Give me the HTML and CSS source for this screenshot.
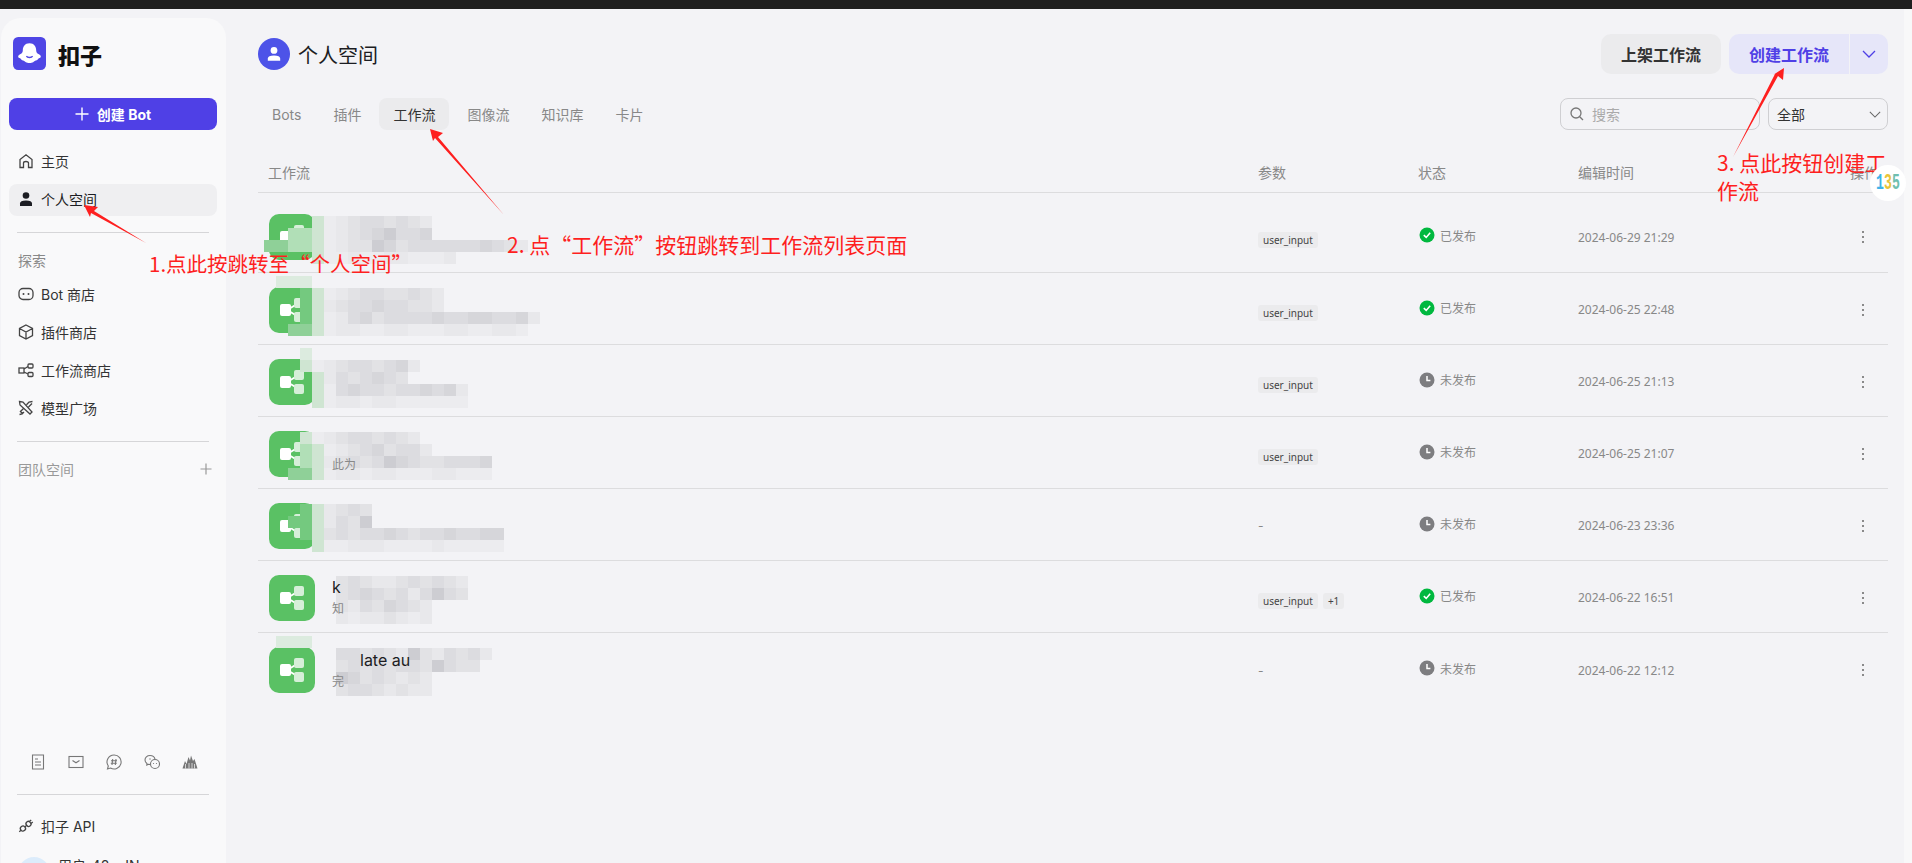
FILE: index.html
```html
<!DOCTYPE html>
<html lang="zh-CN">
<head>
    <meta charset="UTF-8">
    <title>扣子 - 工作流</title>
    <link rel="stylesheet" href="styles.css">
</head>
<body>

    <svg class="sprite" aria-hidden="true">
        <symbol id="wf-icon" viewBox="0 0 46 46">
            <rect width="46" height="46" rx="10" fill="#5ac164"/>
            <path d="M18 23 L30 16 M18 23 L30 30" stroke="#fff" stroke-width="2" fill="none"/>
            <rect x="25" y="11" width="10" height="10" rx="2" fill="#d6efd9"/>
            <rect x="25" y="25" width="10" height="10" rx="2" fill="#d6efd9"/>
            <rect x="11" y="17" width="11" height="12" rx="2" fill="#fff"/>
        </symbol>
        <symbol id="ok-icon" viewBox="0 0 16 16">
            <circle cx="8" cy="8" r="7.5" fill="#00b83f"/>
            <path d="M4.8 8.2 L7.2 10.4 L11.2 5.8" stroke="#fff" stroke-width="1.6" fill="none"/>
        </symbol>
        <symbol id="wait-icon" viewBox="0 0 16 16">
            <circle cx="8" cy="8" r="7.5" fill="#7d7d80"/>
            <path d="M8 4 V8.6 H11.4" stroke="#fff" stroke-width="1.5" fill="none"/>
        </symbol>
        <symbol id="dots-icon" viewBox="0 0 4 16">
            <circle cx="2" cy="3" r="1" fill="#666"/>
            <circle cx="2" cy="8" r="1" fill="#666"/>
            <circle cx="2" cy="13" r="1" fill="#666"/>
        </symbol>
    </svg>

    <div class="topbar"></div>

    <div class="app">
        <aside class="sidebar">
            <div class="brand">
                <svg class="brand-logo" viewBox="0 0 32 32">
                    <rect width="32" height="32" rx="5" fill="#4f46e5"/>
                    <path d="M16 6 C11.500 6 9.500 9.500 9.500 13 C9.500 15 8.500 16 6.500 17 C4.500 18 4.500 20.500 7 20.500 C8.500 23 11 22.500 12.500 24.500 C14 25.500 18 25.500 19.500 24.500 C21 22.500 23.500 23 25 20.500 C27.500 20.500 27.500 18 25.500 17 C23.500 16 22.500 15 22.500 13 C22.500 9.500 20.500 6 16 6 Z" fill="#fff"/>
                    <path d="M13 18.500 C14 20.300 18 20.300 19 18.500" stroke="#4f46e5" stroke-width="1.300" fill="none"/>
                </svg>
                <span class="brand-name">扣子</span>
            </div>

            <button class="create-bot">
                <svg viewBox="0 0 14 14"><path d="M7 0.500 V13.500 M0.500 7 H13.500" stroke="#fff" stroke-width="1.400"/></svg>
                创建 Bot
            </button>

            <nav class="nav nav-main">
                <a class="nav-item">
                    <svg viewBox="0 0 16 16"><path d="M2 14.500 V6.500 L8 1.800 L14 6.500 V14.500 H10.500 V10 C10.500 8 5.500 8 5.500 10 V14.500 Z" class="line"/></svg>
                    主页
                </a>
                <a class="nav-item active">
                    <svg viewBox="0 0 16 16"><circle cx="8" cy="4.500" r="3.300" fill="#1c1d23"/><path d="M2 15 V12.500 C2 10.500 4 9.500 8 9.500 C12 9.500 14 10.500 14 12.500 V15 Z" fill="#1c1d23"/></svg>
                    个人空间
                </a>
            </nav>

            <div class="divider"></div>
            <div class="nav-label">探索</div>

            <nav class="nav">
                <a class="nav-item">
                    <svg viewBox="0 0 16 16"><rect x="1" y="2.500" width="14" height="11" rx="4" class="line"/><circle cx="5.500" cy="8" r="1" fill="#444"/><circle cx="10.500" cy="8" r="1" fill="#444"/></svg>
                    Bot 商店
                </a>
                <a class="nav-item">
                    <svg viewBox="0 0 16 16"><path d="M8 1 L14.500 4.500 V11.500 L8 15 L1.500 11.500 V4.500 Z M1.500 4.500 L8 8 L14.500 4.500 M8 8 V15" class="line"/></svg>
                    插件商店
                </a>
                <a class="nav-item">
                    <svg viewBox="0 0 16 16"><rect x="1" y="6" width="5" height="5" class="line"/><rect x="10" y="2" width="5" height="4" rx="1" class="line"/><rect x="10" y="10.500" width="5" height="4" rx="1" class="line"/><path d="M6 7 L10 4.500 M6 10 L10 12" class="line"/></svg>
                    工作流商店
                </a>
                <a class="nav-item">
                    <svg viewBox="0 0 16 16"><path d="M1.500 1.500 L5 2 L14 12 L12 14 L2 5 Z M14.500 1.500 L11 2 L8.500 4.800 M10.500 7 L14 3.500 M2 12 L5.500 8.500 M1.500 14.500 L4 14 L6 12 M2 11 L5 14" class="line"/></svg>
                    模型广场
                </a>
            </nav>

            <div class="divider divider-team"></div>
            <div class="team-row">
                <span>团队空间</span>
                <svg viewBox="0 0 12 12"><path d="M6 0.500 V11.500 M0.500 6 H11.500" stroke="#999" stroke-width="1.200"/></svg>
            </div>

            <div class="side-tools">
                <svg viewBox="0 0 16 16"><path d="M2.500 1 H13.500 V15 H2.500 Z M5 5 H8 M5 8 H11 M5 11 H11" class="line-grey"/></svg>
                <svg viewBox="0 0 16 16"><rect x="1" y="2.500" width="14" height="11" class="line-grey"/><path d="M4.500 6.500 L8 8.800 L11.500 6.500" class="line-grey"/></svg>
                <svg viewBox="0 0 16 16"><path d="M8 1 A7 7 0 1 1 4.500 14 L1.500 15 L2.300 12 A7 7 0 0 1 8 1 Z M6.700 5 L6 11 M10 5 L9.300 11 M5 6.800 H11 M4.800 9.200 H10.800" class="line-grey"/></svg>
                <svg viewBox="0 0 16 16"><path d="M6 1.500 C3 1.500 1 3.500 1 6 C1 7.500 1.700 8.700 3 9.500 L2.800 11 L4.500 10.200 L6.200 10.500" class="line-grey"/><circle cx="6" cy="5" r="0.700" fill="#777"/><path d="M6 1.500 C8.500 1.500 10.500 3 11 5" class="line-grey"/><circle cx="11" cy="10" r="4.500" class="line-grey"/><circle cx="9.500" cy="9.500" r="0.600" fill="#777"/><circle cx="12.500" cy="9.500" r="0.600" fill="#777"/></svg>
                <svg viewBox="0 0 16 16"><path d="M0.500 14.500 L3 7 L4.500 10 L6.500 3 L8 6.500 L9 1.500 L11 7 L12.500 5 L15.500 14.500 Z" fill="#777"/><path d="M3.500 14.500 V10 M7 14.500 V9 M10 14.500 V9 M12.500 14.500 V10" stroke="#fafafb" stroke-width="0.700"/></svg>
            </div>

            <div class="divider divider-foot"></div>
            <a class="nav-item nav-api">
                <svg viewBox="0 0 16 16"><g transform="rotate(-40 8 8)"><rect x="1.500" y="5.500" width="5" height="5" rx="2.300" class="line"/><rect x="9" y="5.500" width="4.500" height="5" rx="2" class="line"/><path d="M6.500 8 H9 M13.500 6.800 H15.800 M13.500 9.200 H15.800 M1.500 8 H-0.800" class="line"/></g></svg>
                扣子 API
            </a>
            <div class="user">
                <span class="user-avatar"></span>
                <span class="user-name">用户_48...JN</span>
            </div>
        </aside>

        <main class="main">
            <header class="page-head">
                <span class="space-avatar">
                    <svg viewBox="0 0 16 16"><circle cx="8" cy="4.800" r="3" fill="#fff"/><path d="M2.500 14 V12 C2.500 10.300 4.500 9.300 8 9.300 C11.500 9.300 13.500 10.300 13.500 12 V14 Z" fill="#fff"/></svg>
                </span>
                <h1>个人空间</h1>
                <div class="head-actions">
                    <button class="btn btn-grey">上架工作流</button>
                    <div class="btn-split">
                        <button class="btn btn-soft">创建工作流</button>
                        <button class="btn btn-soft btn-caret">
                            <svg viewBox="0 0 14 8"><path d="M1 1 L7 7 L13 1" stroke="#4f40e6" stroke-width="1.300" fill="none"/></svg>
                        </button>
                    </div>
                </div>
            </header>

            <div class="toolbar">
                <div class="tabs">
                    <a class="tab">Bots</a>
                    <a class="tab">插件</a>
                    <a class="tab active">工作流</a>
                    <a class="tab">图像流</a>
                    <a class="tab">知识库</a>
                    <a class="tab">卡片</a>
                </div>
                <div class="search">
                    <svg viewBox="0 0 14 14"><circle cx="6" cy="6" r="5" stroke="#777" stroke-width="1.300" fill="none"/><path d="M9.700 9.700 L13 13" stroke="#777" stroke-width="1.300"/></svg>
                    <span>搜索</span>
                </div>
                <div class="select">
                    <span>全部</span>
                    <svg viewBox="0 0 14 8"><path d="M1 1 L7 7 L13 1" stroke="#666" stroke-width="1.200" fill="none"/></svg>
                </div>
            </div>

            <div class="wf-grid wf-head">
                <div>工作流</div>
                <div>参数</div>
                <div>状态</div>
                <div>编辑时间</div>
                <div class="wf-op">操作</div>
            </div>

            <div class="wf-list" id="wfList">
                <div class="wf-grid wf-row wf-row-first">
                    <div class="wf-name"><svg class="wf-icon"><use href="#wf-icon"/></svg></div>
                    <div><span class="tag">user_input</span></div>
                    <div class="status"><svg><use href="#ok-icon"/></svg>已发布</div>
                    <div class="date">2024-06-29 21:29</div>
                    <div class="more"><svg><use href="#dots-icon"/></svg></div>
                </div>
                <div class="wf-grid wf-row">
                    <div class="wf-name"><svg class="wf-icon"><use href="#wf-icon"/></svg></div>
                    <div><span class="tag">user_input</span></div>
                    <div class="status"><svg><use href="#ok-icon"/></svg>已发布</div>
                    <div class="date">2024-06-25 22:48</div>
                    <div class="more"><svg><use href="#dots-icon"/></svg></div>
                </div>
                <div class="wf-grid wf-row">
                    <div class="wf-name"><svg class="wf-icon"><use href="#wf-icon"/></svg></div>
                    <div><span class="tag">user_input</span></div>
                    <div class="status"><svg><use href="#wait-icon"/></svg>未发布</div>
                    <div class="date">2024-06-25 21:13</div>
                    <div class="more"><svg><use href="#dots-icon"/></svg></div>
                </div>
                <div class="wf-grid wf-row">
                    <div class="wf-name">
                        <svg class="wf-icon"><use href="#wf-icon"/></svg>
                        <div class="wf-text"><div class="wf-title">&nbsp;</div><div class="wf-desc">此为</div></div>
                    </div>
                    <div><span class="tag">user_input</span></div>
                    <div class="status"><svg><use href="#wait-icon"/></svg>未发布</div>
                    <div class="date">2024-06-25 21:07</div>
                    <div class="more"><svg><use href="#dots-icon"/></svg></div>
                </div>
                <div class="wf-grid wf-row">
                    <div class="wf-name"><svg class="wf-icon"><use href="#wf-icon"/></svg></div>
                    <div class="dash">-</div>
                    <div class="status"><svg><use href="#wait-icon"/></svg>未发布</div>
                    <div class="date">2024-06-23 23:36</div>
                    <div class="more"><svg><use href="#dots-icon"/></svg></div>
                </div>
                <div class="wf-grid wf-row">
                    <div class="wf-name">
                        <svg class="wf-icon"><use href="#wf-icon"/></svg>
                        <div class="wf-text"><div class="wf-title">k</div><div class="wf-desc">知</div></div>
                    </div>
                    <div class="tags"><span class="tag">user_input</span><span class="tag">+1</span></div>
                    <div class="status"><svg><use href="#ok-icon"/></svg>已发布</div>
                    <div class="date">2024-06-22 16:51</div>
                    <div class="more"><svg><use href="#dots-icon"/></svg></div>
                </div>
                <div class="wf-grid wf-row wf-row-last">
                    <div class="wf-name">
                        <svg class="wf-icon"><use href="#wf-icon"/></svg>
                        <div class="wf-text"><div class="wf-title wf-title-cut">late au</div><div class="wf-desc">完</div></div>
                    </div>
                    <div class="dash">-</div>
                    <div class="status"><svg><use href="#wait-icon"/></svg>未发布</div>
                    <div class="date">2024-06-22 12:12</div>
                    <div class="more"><svg><use href="#dots-icon"/></svg></div>
                </div>
            </div>
        </main>
        <div class="scroll-strip"></div>
    </div>

    <!-- Red notes drawn over the screenshot -->
    <svg class="arrows" viewBox="0 0 1912 863">
        <polygon points="84,205 98,207 94,211 146,243 91,213 90,217"/>
        <polygon points="430,129 443,133 438,137 504,215 435,138 433,141"/>
        <polygon points="1784,68 1783,80 1778,76 1733,157 1775,74 1773,75"/>
    </svg>
    <div class="note note-1">1.点此按跳转至“个人空间”</div>
    <div class="note note-2">2. 点“工作流”按钮跳转到工作流列表页面</div>
    <div class="note note-3">3. 点此按钮创建工作流</div>

    <div class="float-badge"><span class="d1">1</span><span class="d2">3</span><span class="d3">5</span></div>

    <script src="mosaic.js"></script>
</body>
</html>
```

FILE: styles.css
```css
* {
    box-sizing: border-box;
}

body {
    margin: 0;
    height: 863px;
    overflow: hidden;
    background-color: #f3f3f6;
    color: #1c1d23;
    font-family: "Inter", "Noto Sans CJK SC", sans-serif;
    font-size: 14px;
}

button {
    font-family: inherit;
    border: none;
    cursor: pointer;
}

.sprite {
    display: none;
}

.topbar {
    height: 9px;
    background-color: #1f1f1f;
}

.app {
    display: flex;
    height: 854px;
}

/* Sidebar */
.sidebar {
    width: 225px;
    height: 845px;
    margin: 9px 0 0 1px;
    padding: 19px 8px 0;
    flex-shrink: 0;
    overflow: hidden;
    background-color: #f9f9fa;
    border-radius: 20px 20px 0 0;
}

.brand {
    display: flex;
    align-items: center;
    gap: 12px;
    height: 33px;
    padding-left: 4px;
}

.brand-logo {
    width: 33px;
    height: 33px;
}

.brand-name {
    font-size: 22px;
    font-weight: 900;
    color: #111;
}

.create-bot {
    display: flex;
    align-items: center;
    justify-content: center;
    gap: 8px;
    width: 208px;
    height: 32px;
    margin-top: 28px;
    background-color: #4f40e6;
    border-radius: 8px;
    color: #fff;
    font-size: 14px;
    font-weight: 700;
}

.create-bot svg {
    width: 14px;
    height: 14px;
}

.nav {
    display: flex;
    flex-direction: column;
    gap: 6px;
}

.nav-main {
    margin-top: 16px;
}

.nav-item {
    display: flex;
    align-items: center;
    gap: 7px;
    width: 208px;
    height: 32px;
    padding: 0 0 2px 9px;
    border-radius: 8px;
    color: #333;
}

.nav-item svg {
    width: 16px;
    height: 16px;
    flex-shrink: 0;
}

.nav-item.active {
    background-color: #efeff1;
    color: #1c1d23;
}

.line {
    fill: none;
    stroke: #444;
    stroke-width: 1.3;
}

.line-grey {
    fill: none;
    stroke: #777;
    stroke-width: 1.1;
}

.divider {
    width: 192px;
    height: 1px;
    margin: 16px 0 0 8px;
    background-color: #d6d6d8;
}

.nav-label {
    height: 32px;
    margin: 12px 0 2px 9px;
    line-height: 32px;
    color: #888;
}

.team-row {
    display: flex;
    align-items: center;
    justify-content: space-between;
    height: 32px;
    margin: 11px 6px 0 9px;
    color: #999;
}

.team-row svg {
    width: 12px;
    height: 12px;
}

.side-tools {
    display: flex;
    justify-content: space-between;
    width: 168px;
    margin: 269px 0 0 21px;
}

.side-tools svg {
    width: 16px;
    height: 16px;
}

.divider-foot {
    margin-top: 24px;
}

.nav-api {
    margin-top: 16px;
}

.user {
    display: flex;
    gap: 8px;
    margin: 14px 0 0 9px;
}

.user-avatar {
    width: 32px;
    height: 32px;
    border-radius: 50%;
    background-color: #dcecfb;
}

.user-name {
    line-height: 17px;
    color: #333;
}

/* Main area */
.main {
    flex: 1;
    min-width: 0;
    padding: 25px 0 0 32px;
}

.scroll-strip {
    width: 16px;
    flex-shrink: 0;
    margin-left: 8px;
    background: linear-gradient(to right, #f3f3f6 50%, #f8f8f9 50%);
}

.page-head {
    display: flex;
    align-items: center;
    height: 40px;
}

.space-avatar {
    display: flex;
    align-items: center;
    justify-content: center;
    width: 32px;
    height: 32px;
    border-radius: 50%;
    background-color: #4d53e8;
}

.space-avatar svg {
    width: 18px;
    height: 18px;
}

h1 {
    margin: 0 0 0 8px;
    font-size: 20px;
    font-weight: 400;
}

.head-actions {
    display: flex;
    gap: 8px;
    margin-left: auto;
}

.btn {
    height: 40px;
    font-size: 16px;
    font-weight: 600;
    border-radius: 10px;
}

.btn-grey {
    width: 120px;
    background-color: #ebebed;
    color: #333;
}

.btn-split {
    display: flex;
    gap: 1px;
}

.btn-soft {
    width: 120px;
    background-color: #e6e6f9;
    color: #4f40e6;
    border-radius: 10px 0 0 10px;
}

.btn-caret {
    display: flex;
    align-items: center;
    justify-content: center;
    width: 38px;
    border-radius: 0 10px 10px 0;
}

.btn-caret svg {
    width: 14px;
    height: 8px;
}

.toolbar {
    display: flex;
    align-items: center;
    margin-top: 24px;
}

.tabs {
    display: flex;
    gap: 4px;
}

.tab {
    height: 32px;
    padding: 0 14px;
    line-height: 33px;
    border-radius: 8px;
    color: #888;
}

.tab.active {
    background-color: #ebebed;
    color: #333;
}

.search {
    display: flex;
    align-items: center;
    gap: 8px;
    width: 200px;
    height: 32px;
    margin-left: auto;
    padding-left: 9px;
    border: 1px solid #cfcfd2;
    border-radius: 8px;
    color: #aaa;
}

.search svg {
    width: 14px;
    height: 14px;
}

.select {
    display: flex;
    align-items: center;
    justify-content: space-between;
    width: 120px;
    height: 32px;
    margin-left: 8px;
    padding: 0 6px 0 8px;
    border: 1px solid #cfcfd2;
    border-radius: 8px;
    color: #333;
}

.select svg {
    width: 12px;
    height: 7px;
}

/* Workflow table */
.wf-grid {
    display: grid;
    align-items: center;
    width: 1630px;
}

.wf-head {
    grid-template-columns: 990px 160px 160px 272px 1fr;
    height: 63px;
    padding: 22px 0 0 10px;
    border-bottom: 1px solid #dcdcde;
    color: #888;
}

.wf-op {
    white-space: nowrap;
}

.wf-list {
    position: relative;
}

.wf-row {
    grid-template-columns: 989px 161px 159px 272px 1fr;
    height: 72px;
    padding: 13px 0 11px 11px;
    border-bottom: 1px solid #dcdcde;
}

.wf-row-first {
    height: 80px;
    padding-top: 20px;
}

.wf-row-last {
    border-bottom: none;
}

.wf-name {
    display: flex;
    align-items: center;
    gap: 17px;
}

.wf-icon {
    width: 46px;
    height: 46px;
    flex-shrink: 0;
}

.wf-text {
    position: relative;
    z-index: 2;
}

.wf-title {
    line-height: 20px;
    font-size: 16px;
    color: #1c1d23;
}

.wf-title-cut {
    padding-left: 28px;
}

.wf-desc {
    margin-top: 3px;
    line-height: 18px;
    font-size: 12px;
    color: #888;
}

.tags {
    display: flex;
    gap: 5px;
}

.tag {
    display: inline-block;
    height: 16px;
    margin-top: 6px;
    padding: 0 5px;
    line-height: 16px;
    font-family: "Noto Sans", sans-serif;
    font-size: 10px;
    border-radius: 3px;
    background-color: #ebebed;
    color: #444;
}

.dash {
    font-size: 12px;
    color: #888;
}

.status {
    display: flex;
    align-items: center;
    gap: 5px;
    margin-bottom: 4px;
    font-size: 12px;
    color: #888;
}

.status svg {
    width: 16px;
    height: 16px;
}

.date {
    font-family: "Noto Sans", sans-serif;
    font-size: 12px;
    color: #888;
}

.more {
    padding-left: 11px;
}

.more svg {
    display: block;
    width: 4px;
    height: 16px;
}

/* Blurred patches over names, filled by mosaic.js */
.mosaic {
    position: absolute;
    z-index: 1;
    display: grid;
    grid-auto-rows: 12px;
    grid-template-columns: repeat(24, 12px);
}

.s0 { background-color: transparent; }
.sa { background-color: #ececef; }
.sb { background-color: #e8e8eb; }
.sc { background-color: #e2e2e5; }
.sd { background-color: #dcdce0; }
.se { background-color: #d6d6da; }
.sf { background-color: #cdcdd2; }
.sg { background-color: #cfe5d2; }
.sh { background-color: #8fd098; }
.si { background-color: #74c97f; }
.sj { background-color: #b1dfb7; }
.sl { background-color: #dcebdf; }

/* Annotations */
.arrows {
    position: absolute;
    top: 0;
    left: 0;
    z-index: 3;
    width: 1912px;
    height: 863px;
    pointer-events: none;
}

.arrows polygon {
    fill: #fe1f1f;
}

.note {
    position: absolute;
    z-index: 4;
    color: #fe1f1f;
    font-family: "Noto Sans CJK SC", sans-serif;
    font-size: 21px;
    line-height: 28px;
    white-space: nowrap;
}

.note-1 {
    top: 249px;
    left: 149px;
    font-size: 20.500px;
}

.note-2 {
    top: 230px;
    left: 507px;
}

.note-3 {
    top: 148px;
    left: 1717px;
    width: 175px;
    white-space: normal;
}

.float-badge {
    position: absolute;
    top: 165px;
    left: 1870px;
    z-index: 5;
    display: flex;
    align-items: center;
    justify-content: center;
    width: 36px;
    height: 36px;
    border-radius: 50%;
    background-color: #fff;
    font-family: "Liberation Mono", monospace;
    font-size: 22px;
    font-weight: 700;
}

.float-badge span {
    width: 8px;
    transform: scaleX(0.6);
    transform-origin: left center;
}

.d1 { color: #3fb4e8; }
.d2 { color: #e9c53a; }
.d3 { color: #6fbfb0; }
```

FILE: mosaic.js
```js
// Blurred patches: [top, rows], one letter per 12px cell from x = 264, "." is a hole
const patches = [
    [23, ['....gabcddcdcb', '..jjgabcdefdde', 'hhjjgabccfecddddddedcb', '....gaabaabbaaab']],
    [83, ['.lll']],
    [95, ['...igabcddccdcb', '...igbcddeddccb', '...igabdecddddeddeeddeb', '..hhgabbaabbaaabbaabba']],
    [155, ['...l']],
    [167, ['...gabcddcdeb', '....gbdcdedc', '....gadeddcddedeb', '....gabbabbaaaaaa']],
    [239, ['...gabcddcdcb', '...jgabcdecddb', '...jgbcdcdfedccddde', '..hhgabbabbaaabbaaa']],
    [311, ['...igbcdc', '..iigbdcf', '...igcdcddedcddeddee', '....gaabbbaaaabaaaaa']],
    [383, ['......cdcbbcdcdcb', '......cdedcdbdfdc', '......cbdcedcb', '......babbcbab']],
    [443, ['.lll']],
    [455, ['......ddcdcbfcbdcdb', '......cdcdcddcfdcc', '......fecdcbcb', '......cddcbcbb']]
];

const list = document.getElementById('wfList');

patches.forEach(([top, rows]) => {
    const patch = document.createElement('div');
    patch.className = 'mosaic';
    patch.style.left = '6px';
    patch.style.top = `${top}px`;

    rows.forEach(row => {
        for (let i = 0; i < 24; i++) {
            const cell = document.createElement('span');
            const letter = row[i] || '.';
            cell.className = letter === '.' ? 's0' : `s${letter}`;
            patch.appendChild(cell);
        }
    });

    list.appendChild(patch);
});
```
